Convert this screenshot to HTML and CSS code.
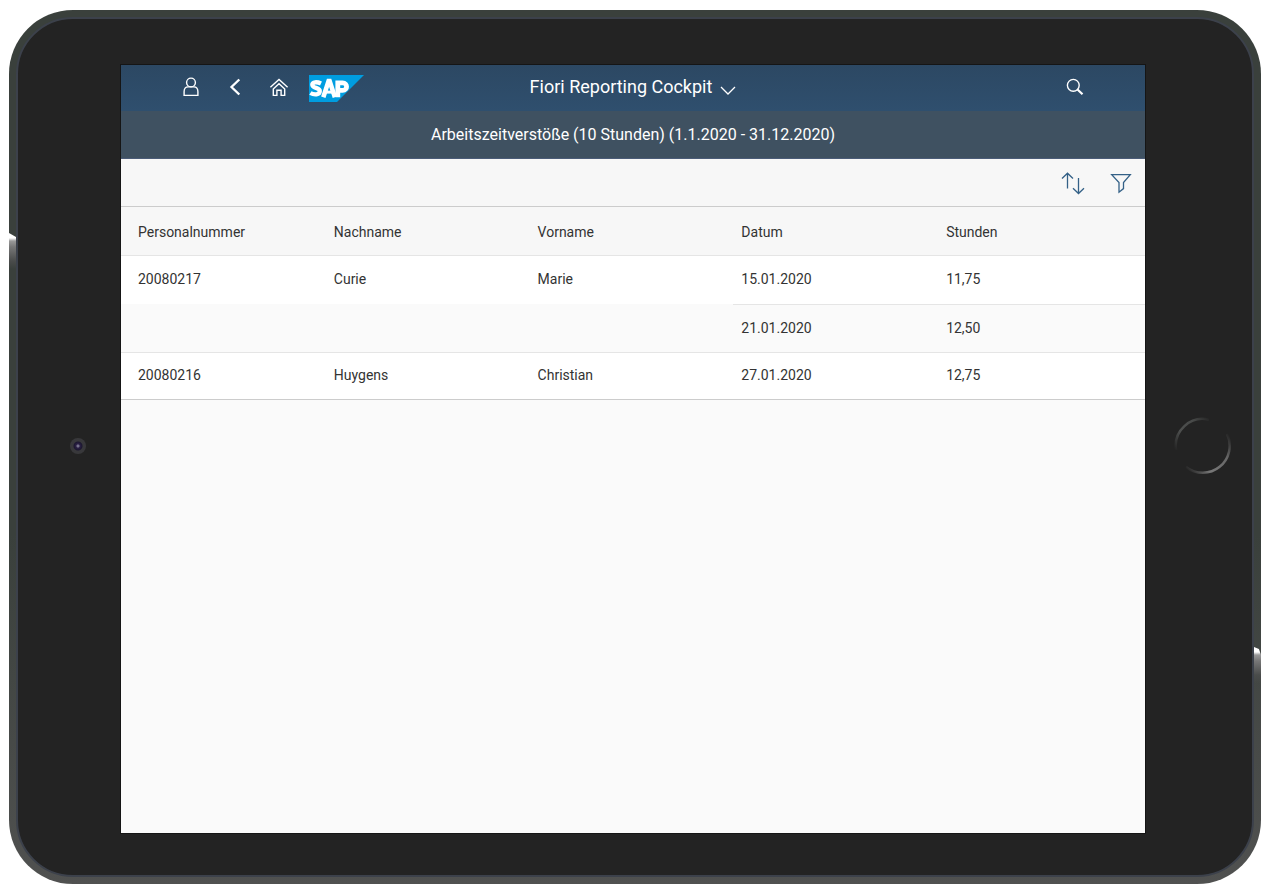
FILE: index.html
```html
<!DOCTYPE html>
<html lang="de">
<head>
<meta charset="utf-8">
<meta name="viewport" content="width=device-width, initial-scale=1">
<title>Fiori Reporting Cockpit</title>
<link rel="stylesheet" href="styles.css">
</head>
<body>
<div class="device">
  <div class="bezel">
    <main class="screen">
      <header class="shell">
        <div class="shell-start">
          <button class="shell-btn" type="button" aria-label="Benutzer">
            <svg width="18" height="20" viewBox="0 0 18 20" fill="none" stroke="currentColor" stroke-width="1.4"><circle cx="9" cy="5.5" r="4.4"/><path d="M2.1 18.4v-3.6c0-3 1.8-4.9 4-4.9h5.8c2.2 0 4 1.900 4 4.900v3.600z"/></svg>
          </button>
          <button class="shell-btn" type="button" aria-label="Zurück">
            <svg width="18" height="20" viewBox="0 0 18 20" fill="none" stroke="currentColor" stroke-width="2.3"><path d="M13.300 2.500 5.500 10l7.800 7.500"/></svg>
          </button>
          <button class="shell-btn" type="button" aria-label="Startseite">
            <svg width="20" height="20" viewBox="0 0 20 20" fill="none" stroke="currentColor" stroke-width="1.400"><path d="M1.400 10.300 10 2.500l8.600 7.800M4 12.200l6-5.400 6 5.400M4.300 12v6.400h3.600v-5.100h4.200v5.100h3.600V12"/></svg>
          </button>
          <a class="logo" href="#" aria-label="SAP">
            <svg width="55" height="27" viewBox="0 0 55 27"><path fill="#009de0" d="M0 0h55L28 27H0z"/><g fill="none" stroke="#fff"><path stroke-width="4.300" d="M12 8.500C8 6.600 3.300 6.700 3.300 9.800c0 3.800 7.500 2.400 7.500 6.300 0 3.900-5.600 4.200-9.400 1.900"/><path stroke-width="4.600" d="m14.300 22.300 5.300-16.300h1l5.300 16.300"/><path stroke-width="3" d="M16 17.100h8"/><path stroke-width="4.800" d="M28.800 22.300V7.900h4.800c5.300 0 5.300 7.500 0 7.500h-4.800"/></g></svg>
          </a>
        </div>
        <h1 class="shell-title"><button class="title-btn" type="button">Fiori Reporting Cockpit
          <svg width="16" height="10" viewBox="0 0 16 10" fill="none" stroke="currentColor" stroke-width="1.300"><path d="m1 1 7 7 7-7"/></svg></button></h1>
        <div class="shell-end">
          <button class="shell-btn" type="button" aria-label="Suchen">
            <svg width="18" height="18" viewBox="0 0 18 18" fill="none" stroke="currentColor"><circle cx="7.300" cy="7.300" r="5.900" stroke-width="1.400"/><path stroke-width="2.200" d="m11.500 11.500 5 4.700"/></svg>
          </button>
        </div>
      </header>
      <h2 class="page-title">Arbeitszeitverstöße (10 Stunden) (1.1.2020 - 31.12.2020)</h2>
      <div class="toolbar">
        <button class="tool-btn" type="button" aria-label="Sortieren">
          <svg width="24" height="24" viewBox="0 0 24 24" fill="none" stroke="currentColor" stroke-width="1.300"><path d="M6.500 17.500v-15M1 7.500l5.500-5.300L12 7.500M17.500 7v15M12 17.200l5.500 5.300 5.500-5.300"/></svg>
        </button>
        <button class="tool-btn" type="button" aria-label="Filtern">
          <svg width="22" height="22" viewBox="0 0 22 22" fill="none" stroke="currentColor" stroke-width="1.300"><path d="M1.700 2.600h18.600l-6.800 8v6L9 20.200v-9.600z"/></svg>
        </button>
      </div>
      <table class="report">
        <colgroup><col class="col-id"><col class="col-name"><col class="col-name"><col class="col-date"><col></colgroup>
        <thead>
          <tr><th scope="col">Personalnummer</th><th scope="col">Nachname</th><th scope="col">Vorname</th><th scope="col">Datum</th><th scope="col">Stunden</th></tr>
        </thead>
        <tbody>
          <tr><td class="grouped">20080217</td><td class="grouped">Curie</td><td class="grouped">Marie</td><td>15.01.2020</td><td>11,75</td></tr>
          <tr class="alt"><td></td><td></td><td></td><td>21.01.2020</td><td>12,50</td></tr>
          <tr><td>20080216</td><td>Huygens</td><td>Christian</td><td>27.01.2020</td><td>12,75</td></tr>
        </tbody>
      </table>
    </main>
  </div>
  <span class="glint glint-left"></span>
  <span class="glint glint-right"></span>
  <span class="camera"></span>
  <svg class="home" width="58" height="58" viewBox="0 0 58 58" fill="none" stroke-width="2.500" aria-hidden="true">
    <defs>
      <linearGradient id="arc-a" gradientUnits="userSpaceOnUse" x1="1" y1="33" x2="36" y2="1"><stop offset="0" stop-color="#232323"/><stop offset=".35" stop-color="#4d4f4e"/><stop offset=".7" stop-color="#484a49"/><stop offset="1" stop-color="#232323"/></linearGradient>
      <linearGradient id="arc-b" gradientUnits="userSpaceOnUse" x1="12" y1="52" x2="54" y2="16"><stop offset="0" stop-color="#232323"/><stop offset=".3" stop-color="#777"/><stop offset=".7" stop-color="#666"/><stop offset="1" stop-color="#232323"/></linearGradient>
    </defs>
    <path stroke="url(#arc-a)" d="M2 33A27 27 0 0 1 35 2.700"/>
    <path stroke="url(#arc-b)" d="M53 17A27 27 0 0 1 12 50"/>
  </svg>
</div>
</body>
</html>
```

FILE: styles.css
```css
* {
  box-sizing: border-box;
}

body {
  margin: 0;
  background: #fff;
  color: #333;
  font: 14px/20px Roboto, "Liberation Sans", sans-serif;
}

button {
  border: 0;
  padding: 0;
  background: none;
  color: inherit;
  font: inherit;
  cursor: pointer;
}

svg {
  display: block;
}

.device {
  position: relative;
  display: flex;
  min-height: calc(100vh - 19px);
  margin: 10px 11px 9px 9px;
  padding: 7px;
  border-radius: 64px;
  background: linear-gradient(#3a403c, #3a403c 60%, #505150);
}

.bezel {
  flex: 1;
  display: flex;
  padding: 46px 107px 42px 103px;
  border: 2px solid #3c414b;
  border-radius: 57px;
  background: #232323;
}

.screen {
  flex: 1;
  background: #fafafa;
  box-shadow: 0 0 0 1px #151515;
}

.shell {
  display: grid;
  grid-template-columns: 1fr auto 1fr;
  align-items: center;
  height: 46px;
  padding: 0 48px 2px;
  background: linear-gradient(#2c4863, #2f4f6e);
  color: #fff;
}

.shell-start,
.shell-end {
  display: flex;
  align-items: center;
}

.shell-end {
  justify-content: flex-end;
}

.shell-btn {
  display: grid;
  place-items: center;
  width: 44px;
  height: 44px;
}

.logo {
  margin: 2px 0 0 8px;
}

.shell-title {
  margin: 0;
  font-size: 18px;
  font-weight: 400;
}

.title-btn {
  display: flex;
  align-items: center;
  gap: 8px;
}

.title-btn svg {
  margin-top: 8px;
}

.page-title {
  margin: 0;
  border-bottom: 1px solid #4b5c78;
  background: #3f5161;
  color: #fff;
  font-size: 16px;
  font-weight: 400;
  line-height: 47px;
  text-align: center;
}

.toolbar {
  display: flex;
  justify-content: flex-end;
  height: 48px;
  border-bottom: 1px solid #ccc;
  background: #f7f7f7;
  color: #346187;
}

.tool-btn {
  display: grid;
  place-items: center;
  width: 48px;
  height: 48px;
}

.report {
  width: 100%;
  border-spacing: 0;
  border-bottom: 1px solid #ccc;
  table-layout: fixed;
}

.col-id,
.col-date {
  width: 20%;
}

.col-name {
  width: 19.9%;
}

.report th,
.report td {
  height: 48px;
  padding: 0 8px 2px;
  border-bottom: 1px solid #e5e5e5;
  background: #fff;
  font-weight: 400;
  text-align: left;
}

.report th {
  height: 49px;
  padding: 2px 8px 0;
  background: #f7f7f7;
}

.report th:first-child,
.report td:first-child {
  padding-left: 17px;
}

.report tbody tr:first-child td {
  height: 49px;
}

.report .alt td {
  background: #fafafa;
}

.report .grouped {
  border-bottom-color: #fafafa;
}

.report tbody tr:last-child td {
  height: 46px;
  border-bottom: 0;
}

.glint {
  position: absolute;
  width: 7px;
  height: 36px;
  background: linear-gradient(#fff, #fff 5px, #999 8px, #777 14px, #4a4c4b 28px, transparent);
}

.glint-left {
  top: 223px;
  left: 0;
  clip-path: polygon(0 0, 100% 4px, 100% 100%, 0 100%);
}

.glint-right {
  top: 637px;
  right: 0;
  clip-path: polygon(0 0, 70% 2px, 100% 8px, 100% 100%, 0 100%);
}

.camera {
  position: absolute;
  top: calc(50% - 9px);
  left: 61px;
  width: 16px;
  height: 16px;
  border-radius: 50%;
  background: radial-gradient(circle, #77738c 1px, #2c2147 2px, #1c1730 4px, #38383b 5px);
}

.home {
  position: absolute;
  top: calc(50% - 30px);
  right: 29px;
}
```
